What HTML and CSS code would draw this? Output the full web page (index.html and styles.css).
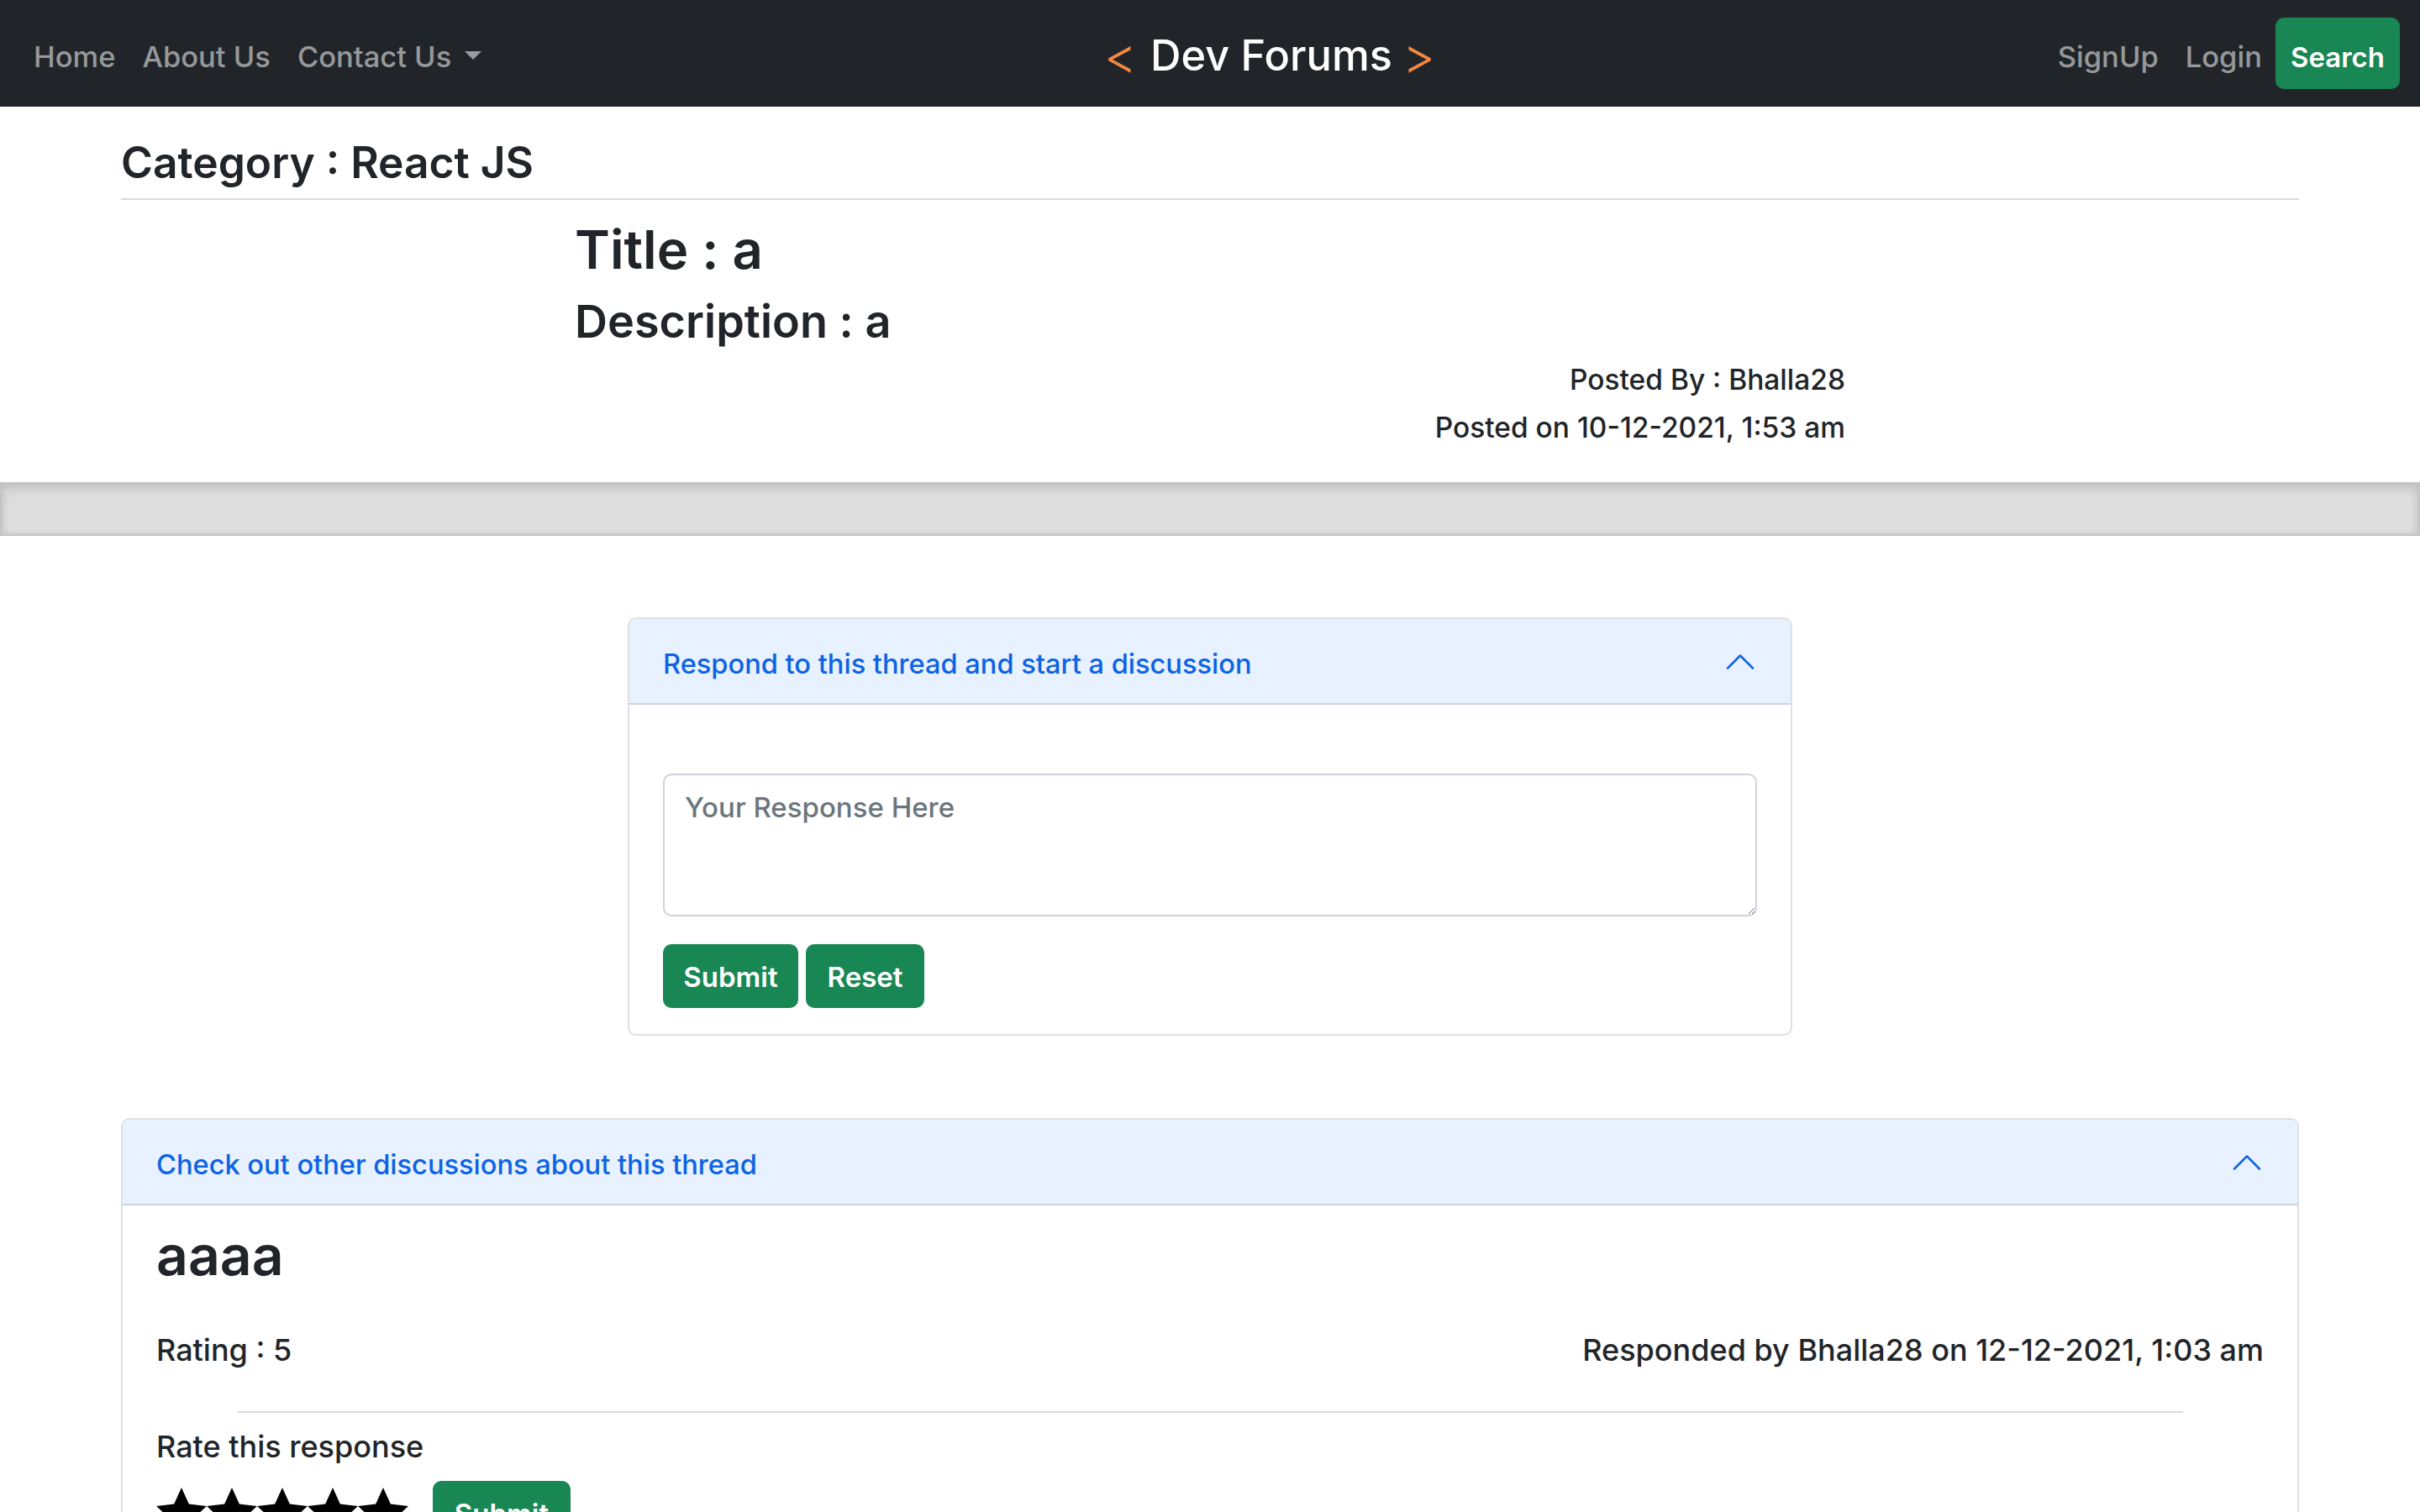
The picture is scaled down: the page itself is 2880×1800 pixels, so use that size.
FILE: index.html
```html
<!DOCTYPE html>
<html lang="en">
<head>
<meta charset="utf-8">
<title>Dev Forums - React JS</title>
<link rel="stylesheet" href="styles.css">
</head>
<body>
<nav class="navbar">
  <ul class="nav-left">
    <li><a class="nav-link" href="#">Home</a></li>
    <li><a class="nav-link" href="#">About Us</a></li>
    <li><a class="nav-link" href="#">Contact Us<span class="caret"></span></a></li>
  </ul>
  <a class="brand" href="#"><span class="bracket">&lt;</span><span class="brand-name">Dev Forums</span><span class="bracket">&gt;</span></a>
  <div class="nav-right">
    <a class="nav-link" href="#">SignUp</a>
    <a class="nav-link" href="#">Login</a>
    <button class="btn btn-search" type="button">Search</button>
  </div>
</nav>

<main>
  <section class="container thread">
    <h4 class="category">Category : React JS</h4>
    <hr class="divider">
    <div class="thread-body">
      <h2 class="title">Title : a</h2>
      <h3 class="desc">Description : a</h3>
      <p class="meta meta-first">Posted By : Bhalla28</p>
      <p class="meta">Posted on 10-12-2021, 1:53 am</p>
    </div>
  </section>

  <div class="band"></div>

  <section class="accordion respond">
    <div class="acc-header">
      <span>Respond to this thread and start a discussion</span>
      <svg class="chevron" viewBox="0 0 16 16" width="40" height="40"><path fill="#0c63e4" fill-rule="evenodd" d="M1.646 4.646a.5.5 0 0 1 .708 0L8 10.293l5.646-5.647a.5.5 0 0 1 .708.708l-6 6a.5.5 0 0 1-.708 0l-6-6a.5.5 0 0 1 0-.708z"/></svg>
    </div>
    <div class="acc-body respond-body">
      <textarea class="response" placeholder="Your Response Here"></textarea>
      <div class="actions">
        <button class="btn btn-submit" type="button">Submit</button>
        <button class="btn btn-reset" type="button">Reset</button>
      </div>
    </div>
  </section>

  <section class="container">
    <div class="accordion discussions">
      <div class="acc-header">
        <span>Check out other discussions about this thread</span>
        <svg class="chevron" viewBox="0 0 16 16" width="40" height="40"><path fill="#0c63e4" fill-rule="evenodd" d="M1.646 4.646a.5.5 0 0 1 .708 0L8 10.293l5.646-5.647a.5.5 0 0 1 .708.708l-6 6a.5.5 0 0 1-.708 0l-6-6a.5.5 0 0 1 0-.708z"/></svg>
      </div>
      <div class="acc-body discussion-body">
        <h2 class="reply">aaaa</h2>
        <div class="reply-meta">
          <p>Rating : 5</p>
          <p>Responded by Bhalla28 on 12-12-2021, 1:03 am</p>
        </div>
        <hr class="reply-divider">
        <p class="rate-label">Rate this response</p>
        <div class="rate-row">
          <div class="stars">
            <svg class="star" viewBox="0 0 21 20.1"><polygon points="10.5,0 13.6,6.8 21,7.7 15.5,12.8 17,20.1 10.5,16.5 4,20.1 5.5,12.8 0,7.7 7.4,6.8"/></svg>
            <svg class="star" viewBox="0 0 21 20.1"><polygon points="10.5,0 13.6,6.8 21,7.7 15.5,12.8 17,20.1 10.5,16.5 4,20.1 5.5,12.8 0,7.7 7.4,6.8"/></svg>
            <svg class="star" viewBox="0 0 21 20.1"><polygon points="10.5,0 13.6,6.8 21,7.7 15.5,12.8 17,20.1 10.5,16.5 4,20.1 5.5,12.8 0,7.7 7.4,6.8"/></svg>
            <svg class="star" viewBox="0 0 21 20.1"><polygon points="10.5,0 13.6,6.8 21,7.7 15.5,12.8 17,20.1 10.5,16.5 4,20.1 5.5,12.8 0,7.7 7.4,6.8"/></svg>
            <svg class="star" viewBox="0 0 21 20.1"><polygon points="10.5,0 13.6,6.8 21,7.7 15.5,12.8 17,20.1 10.5,16.5 4,20.1 5.5,12.8 0,7.7 7.4,6.8"/></svg>
          </div>
          <button class="btn btn-rate" type="button">Submit</button>
        </div>
      </div>
    </div>
  </section>
</main>
</body>
</html>
```

FILE: styles.css
```css
* {
  box-sizing: border-box;
}

html,
body {
  margin: 0;
  padding: 0;
}

body {
  font-family: Inter, "Liberation Sans", Arial, sans-serif;
  font-size: 33px;
  line-height: 1.5;
  color: #212529;
  background: #ffffff;
}

/* ---------- navbar ---------- */
.navbar {
  height: 127px;
  background: #212529;
  display: flex;
  align-items: center;
  padding: 0 24px;
}

.nav-left {
  list-style: none;
  margin: 0;
  padding: 0;
  display: flex;
}

.nav-link {
  display: block;
  color: rgba(255, 255, 255, 0.55);
  text-decoration: none;
  font-size: 34.5px;
  font-weight: 500;
  line-height: 50px;
  padding: 8px 16px 0;
}

.caret {
  display: inline-block;
  margin-left: 16px;
  vertical-align: 0.255em;
  border-top: 10px solid;
  border-right: 10px solid transparent;
  border-left: 10px solid transparent;
  border-bottom: 0;
}

.brand {
  margin: 0 auto;
  color: #ffffff;
  text-decoration: none;
  display: flex;
  align-items: center;
  padding-top: 6px;
}

.brand-name {
  font-size: 50.5px;
  font-weight: 500;
  line-height: 1;
  margin: 0 12px 0 16px;
}

.bracket {
  color: #f5873f;
  font-size: 60px;
  font-weight: 300;
  line-height: 1;
  position: relative;
  top: -1px;
}

.nav-right {
  display: flex;
  align-items: center;
}

.btn {
  font-family: inherit;
  border: 0;
  background: #198754;
  color: #ffffff;
  border-radius: 10px;
  font-weight: 600;
  cursor: pointer;
}

.btn-search {
  height: 85px;
  padding: 8px 18px 0;
  font-size: 33px;
}

/* ---------- thread header ---------- */
.container {
  width: 2592px;
  margin: 0 auto;
}

.category {
  margin: 36px 0 0;
  font-size: 51.5px;
  font-weight: 600;
  line-height: 1.2;
}

.divider {
  margin: 11px 0 0;
  border: 0;
  border-top: 2px solid #dadada;
  height: 0;
}

.thread-body {
  margin: 0 540px;
}

.title {
  margin: 21px 0 0;
  font-size: 63.5px;
  font-weight: 600;
  line-height: 1.2;
}

.desc {
  margin: 16px 0 0;
  font-size: 54px;
  font-weight: 600;
  line-height: 1.2;
}

.meta {
  margin: 8px 0 0;
  text-align: right;
  font-size: 33.5px;
  font-weight: 500;
  line-height: 49px;
}

.meta-first {
  margin-top: 12px;
}

.band {
  margin-top: 40px;
  height: 64px;
  background: #dedede;
  border: 2px solid #c4c4c4;
  box-shadow: inset 0 8px 12px rgba(0, 0, 0, 0.09), inset 4px 0 8px rgba(0, 0, 0, 0.04), inset -4px 0 8px rgba(0, 0, 0, 0.04);
}

/* ---------- accordions ---------- */
.accordion {
  border: 2px solid #dfdfdf;
  border-radius: 10px;
  overflow: hidden;
  background: #ffffff;
}

.respond {
  width: 1386px;
  margin: 97px auto 0;
}

.discussions {
  margin-top: 98px;
}

.acc-header {
  height: 102px;
  background: #e7f1ff;
  color: #0c63e4;
  font-size: 32.6px;
  font-weight: 500;
  padding: 6px 40px 0;
  display: flex;
  align-items: center;
  justify-content: space-between;
  box-shadow: inset 0 -2px 0 rgba(0, 0, 0, 0.125);
}

.chevron {
  transform: rotate(180deg);
  flex-shrink: 0;
  margin-top: -6px;
}

.respond-body {
  padding: 82px 40px 31px;
}

.response {
  display: block;
  width: 100%;
  height: 170px;
  border: 2px solid #ced4da;
  border-radius: 10px;
  padding: 14px 24px 10px;
  font-family: inherit;
  font-size: 33px;
  font-weight: 500;
  line-height: 1.5;
  color: #212529;
  resize: vertical;
}

.response::placeholder {
  color: #6c757d;
}

.actions {
  margin-top: 33px;
  display: flex;
  gap: 9px;
}

.btn-submit,
.btn-reset,
.btn-rate {
  height: 76px;
  font-size: 33px;
  padding: 2px 20px 0;
}

.btn-submit {
  width: 161px;
}

.btn-reset {
  width: 141px;
}

.discussion-body {
  padding: 20px 40px 40px;
}

.reply {
  margin: 0;
  font-size: 66px;
  font-weight: 600;
  line-height: 78px;
}

.reply-meta {
  margin-top: 50px;
  display: flex;
  justify-content: space-between;
}

.reply-meta p,
.rate-label {
  margin: 0;
  font-size: 36px;
  font-weight: 500;
  line-height: 49px;
}

.reply-divider {
  margin: 48px 96px 0;
  border: 0;
  border-top: 2px solid #dadada;
  height: 0;
}

.rate-label {
  margin-top: 16px;
}

.rate-row {
  margin-top: 16px;
  display: flex;
  align-items: flex-start;
}

.stars {
  display: flex;
  padding-top: 8px;
}

.star {
  width: 60px;
  height: 57.4px;
  fill: #000000;
}

.btn-rate {
  margin-left: 29px;
  width: 164px;
}
```
